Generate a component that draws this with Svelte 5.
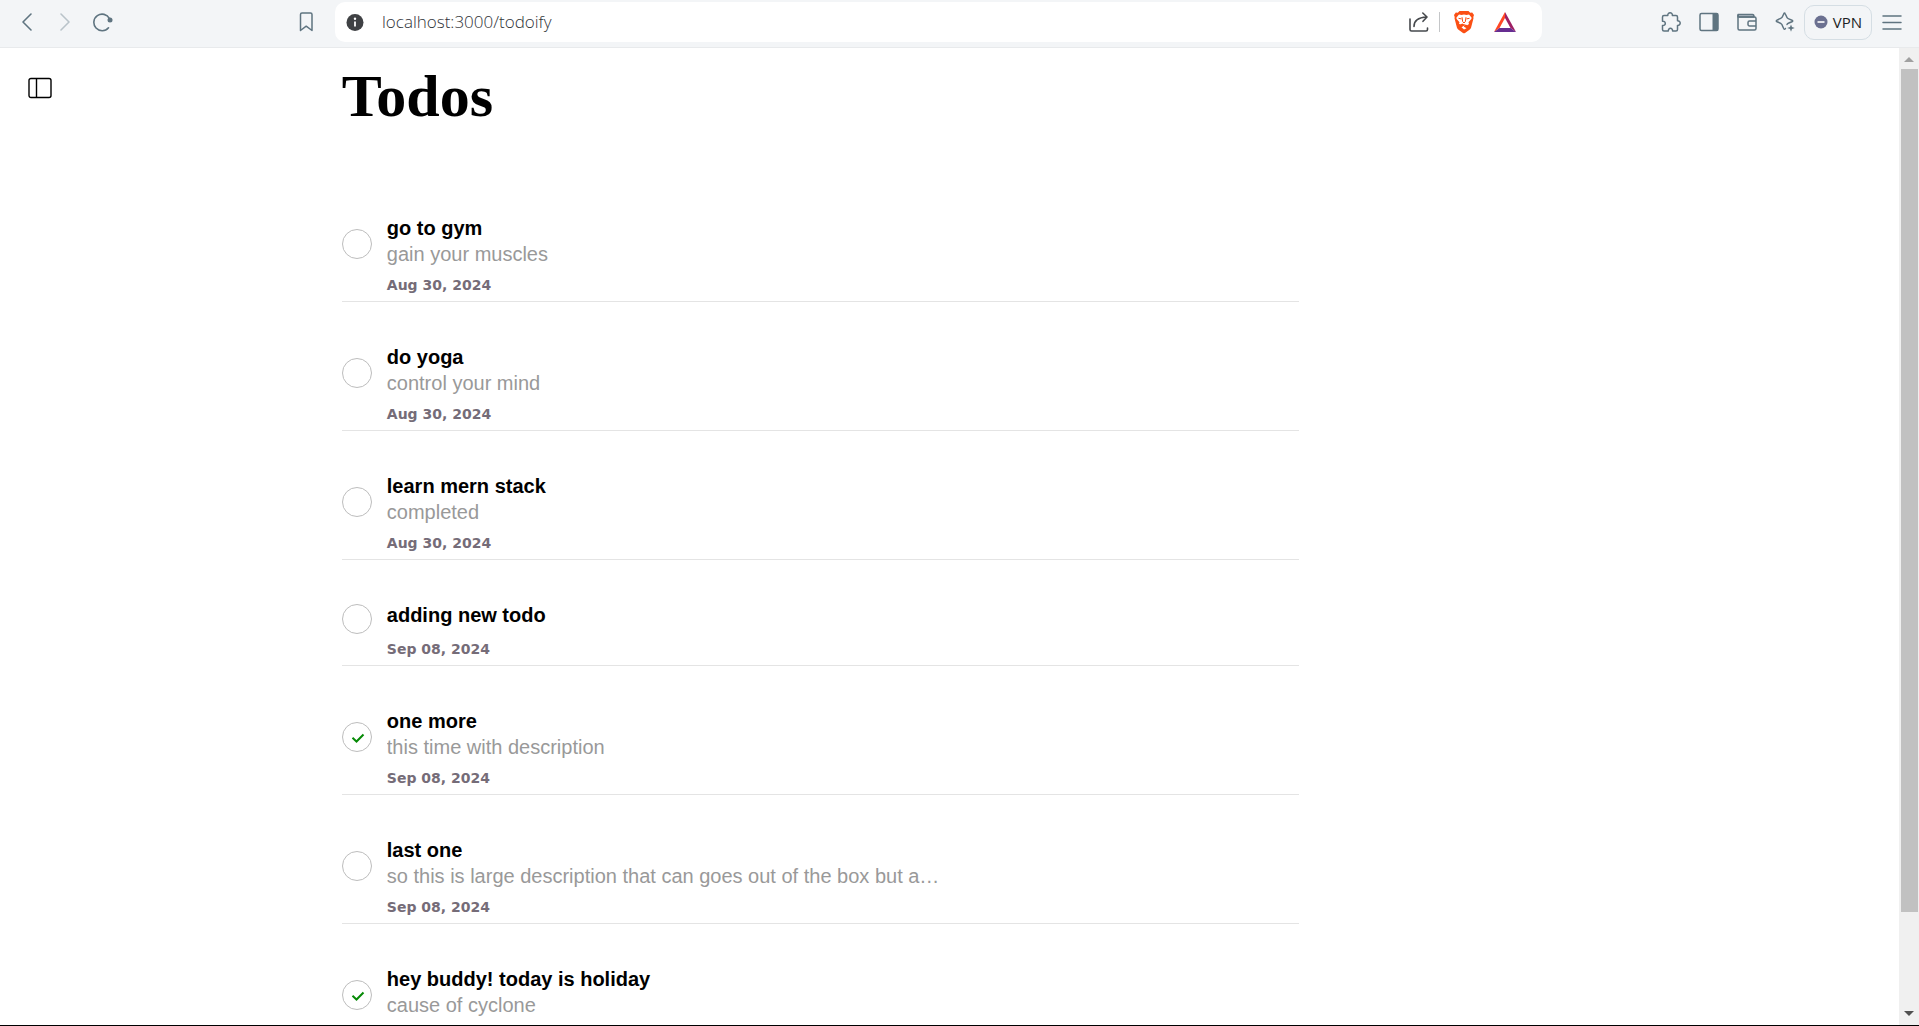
<script>
  let todos = $state([
    { title: 'go to gym', note: 'gain your muscles', date: 'Aug 30, 2024', done: false },
    { title: 'do yoga', note: 'control your mind', date: 'Aug 30, 2024', done: false },
    { title: 'learn mern stack', note: 'completed', date: 'Aug 30, 2024', done: false },
    { title: 'adding new todo', note: '', date: 'Sep 08, 2024', done: false },
    { title: 'one more', note: 'this time with description', date: 'Sep 08, 2024', done: true },
    { title: 'last one', note: 'so this is large description that can goes out of the box but a…', date: 'Sep 08, 2024', done: false },
    { title: 'hey buddy! today is holiday', note: 'cause of cyclone', date: 'Sep 08, 2024', done: true }
  ]);
  let url = $state('localhost:3000/todoify');
</script>

<div class="window">
  <header class="toolbar">
    <nav class="left" aria-label="Navigation">
      <button class="icon" aria-label="Back">
        <svg width="20" height="20" viewBox="0 0 20 20" fill="none" stroke="#5f7480" stroke-width="1.6" stroke-linecap="round" stroke-linejoin="round"><path d="M14 2 6 10l8 8" /></svg>
      </button>
      <button class="icon" aria-label="Forward">
        <svg width="20" height="20" viewBox="0 0 20 20" fill="none" stroke="#b9c3c9" stroke-width="1.6" stroke-linecap="round" stroke-linejoin="round"><path d="m6 2 8 8-8 8" /></svg>
      </button>
      <button class="icon" aria-label="Reload">
        <svg width="20" height="20" viewBox="0 0 20 20" fill="none" stroke="#5f7480" stroke-width="1.6" stroke-linecap="round"><path d="M15.500 15.800A8.300 8.300 0 1 1 16.500 6.600" /><circle cx="17" cy="8" r="2.500" fill="#5f7480" stroke="none" /></svg>
      </button>
      <button class="icon bookmark" aria-label="Bookmark">
        <svg width="20" height="20" viewBox="0 0 20 20" fill="none" stroke="#5f7480" stroke-width="1.5" stroke-linejoin="round"><path d="M6 1h8.500a1.500 1.500 0 0 1 1.500 1.500V18.500L10.200 14.200 4.500 18.500V2.500A1.500 1.500 0 0 1 6 1Z" /></svg>
      </button>
    </nav>

    <div class="address">
      <button class="icon" aria-label="Site information">
        <svg width="20" height="20" viewBox="0 0 20 20"><circle cx="10" cy="10.500" r="8.500" fill="#3f4144" /><circle cx="10" cy="6.800" r="1.200" fill="#fff" /><path d="M10 9.500v5" stroke="#fff" stroke-width="1.800" /></svg>
      </button>
      <input type="text" aria-label="Address" bind:value={url} />
      <button class="icon" aria-label="Share">
        <svg width="20" height="20" viewBox="0 0 20 20" fill="none" stroke="#46494d" stroke-width="1.600" stroke-linecap="round" stroke-linejoin="round"><path d="M1 7v10.500a1.500 1.500 0 0 0 1.500 1.500H17a1.500 1.500 0 0 0 1.500-1.500V16" /><path d="M5 14.500c0-5.500 3.500-9 12.500-9.500M13.800 1 18 5l-4 4.300" /></svg>
      </button>
      <span class="divider"></span>
      <button class="icon" aria-label="Brave Shields">
        <svg width="20" height="24" viewBox="0 0 20 24">
          <path d="M5.500 1h9l1.700 1.700 2-.2L20 5l-.7 2 .2 1.300-2.400 9.100q-.4 1.400-1.600 2.300L11 23q-1 .7-2 0l-4.500-3.300q-1.200-.9-1.600-2.300L.5 8.300.7 7 0 5l1.800-2.500 2 .2Z" fill="#fb4f14" />
          <path d="M5 4.500 7.500 5 10 4.500l2.500.5 2.500-.5L17.500 7.500q.3 1-.4 1.800l-2.600 3 .5 1.800-1.800 1.200-1.600-.7-1.600 1.200v1l2.500 1.500L10 19.500l-2.500-2.200L10 15.800v-1l-1.600-1.200-1.600.7L5 14.100l.5-1.800-2.600-3q-.7-.8-.4-1.800Z" fill="#fff" />
          <path d="m4.500 8.300 3 .6M15.500 8.300l-3 .6M8 7.200l.7 4.500L10 13l1.300-1.300.7-4.500M7.500 16.200 10 14.500l2.500 1.700" fill="none" stroke="#fb4f14" stroke-width="1" />
        </svg>
      </button>
      <button class="icon bat" aria-label="Brave Rewards">
        <svg width="22" height="20" viewBox="0 0 22 20">
          <path d="M11 0v6L5.500 16 0 20Z" fill="#ff4724" />
          <path d="M11 0v6l5.500 10 5.500 4Z" fill="#9e1f63" />
          <path d="m0 20 5.500-4h11l5.500 4Z" fill="#662d91" />
        </svg>
      </button>
    </div>

    <div class="right">
      <button class="icon" aria-label="Extensions">
        <svg width="20" height="20" viewBox="0 0 20 20" fill="none" stroke="#5f7480" stroke-width="1.500" stroke-linejoin="round"><path d="M3 3.500H6.800c-.4-3.600 5-3.600 4.600 0H15a1.500 1.500 0 0 1 1.500 1.500v3.800c3.600-.2 3.600 4.800 0 4.600V17.500a1.500 1.500 0 0 1-1.500 1.500h-3.400c.2-3.600-4.500-3.600-4.300 0H3A1.500 1.500 0 0 1 1.500 17.500v-3.900c3.700.3 3.700-4.700 0-4.400V5A1.500 1.500 0 0 1 3 3.500Z" /></svg>
      </button>
      <button class="icon" aria-label="Side panel">
        <svg width="20" height="20" viewBox="0 0 20 20"><rect x="1" y="1.500" width="18" height="17" rx="1.500" fill="none" stroke="#5f7480" stroke-width="1.500" /><path d="M13.500 1.500H19v17h-5.500Z" fill="#5f7480" /></svg>
      </button>
      <button class="icon" aria-label="Wallet">
        <svg width="20" height="20" viewBox="0 0 20 20" fill="none" stroke="#5f7480" stroke-width="1.500" stroke-linejoin="round"><path d="M1 2.500h14.500q1.500 0 1.500 2.500H1Z" fill="#b6bfca" /><path d="M1 3v13.500A1.500 1.500 0 0 0 2.500 18h15a1.500 1.500 0 0 0 1.500-1.500v-10A1.500 1.500 0 0 0 17.500 5H2" /><path d="M19 9h-6.500a1.500 1.500 0 0 0-1.500 1.500v2a1.500 1.500 0 0 0 1.500 1.500H19" /></svg>
      </button>
      <button class="icon" aria-label="Leo AI">
        <svg width="20" height="20" viewBox="0 0 20 20" fill="none" stroke="#5f7480" stroke-width="1.500" stroke-linejoin="round" stroke-linecap="round"><path d="M12 12.500q.6-1.200 5-2.700 1.500-.8 0-1.600-4.500-1.500-5-2.700T10.300 2q-.8-1.800-1.600 0-1.300 3-1.800 3.500T2 8.200q-1.500.8 0 1.600 4.300 1.400 4.900 2.700t1.800 4q.8 1.600 1.700 0" /><path d="m16 12.500 1 2.600 2.800.9-2.800 1-1 2.700-1-2.700-2.800-1 2.800-.9Z" fill="#5f7480" stroke="none" /></svg>
      </button>
      <button class="vpn">
        <svg width="14" height="14" viewBox="0 0 14 14"><circle cx="7" cy="7" r="6.500" fill="#6b7090" /><path d="M3.500 7h7" stroke="#fff" stroke-width="1.600" /></svg>
        VPN
      </button>
      <button class="icon menu" aria-label="Menu">
        <svg width="20" height="20" viewBox="0 0 20 20" stroke="#5f7480" stroke-width="1.500" stroke-linecap="round"><path d="M1 4h18M1 10.500h18M1 17h18" /></svg>
      </button>
    </div>
  </header>

  <div class="viewport">
    <div class="page">
      <aside>
        <button class="icon" aria-label="Open sidebar">
          <svg width="24" height="22" viewBox="0 0 24 22" fill="none" stroke="#000" stroke-width="1.400"><rect x="1" y="1.500" width="22" height="19" rx="2" /><path d="M8.500 1.500v19" /></svg>
        </button>
      </aside>
      <main>
        <h1>Todos</h1>
        <ul>
          {#each todos as todo}
            <li>
              <label class="item">
                <span class="check">
                  <input type="checkbox" bind:checked={todo.done} />
                  {#if todo.done}
                    <svg width="30" height="30" viewBox="0 0 30 30" fill="none" stroke="#068a06" stroke-width="2"><path d="m10.500 15.800 4 3.700 7-7" /></svg>
                  {/if}
                </span>
                <span class="text">
                  <span class="title">{todo.title}</span>
                  {#if todo.note}<span class="note">{todo.note}</span>{/if}
                </span>
              </label>
              <time>{todo.date}</time>
            </li>
          {/each}
        </ul>
      </main>
    </div>
    <div class="scrollbar" aria-hidden="true">
      <svg width="10" height="5" viewBox="0 0 10 5"><path d="M0 5 5 0l5 5Z" fill="#a0a0a0" /></svg>
      <div class="track"><div class="thumb"></div></div>
      <svg width="10" height="5" viewBox="0 0 10 5"><path d="m0 0 5 5 5-5Z" fill="#505050" /></svg>
    </div>
  </div>
</div>

<style>
  :global(body) {
    margin: 0;
    overflow: hidden;
  }
  .window {
    display: flex;
    flex-direction: column;
    height: 100vh;
    box-sizing: border-box;
    border-bottom: 1px solid #000;
    background: #fff;
    font-family: 'Liberation Sans', Arial, sans-serif;
  }
  button {
    padding: 0;
    border: 0;
    background: none;
    cursor: pointer;
  }
  .icon {
    display: flex;
    flex: none;
  }
  .toolbar {
    display: flex;
    flex: none;
    height: 47px;
    background: #f3f5f7;
    border-bottom: 1px solid #e8eaec;
  }
  .left {
    display: flex;
    align-items: center;
    gap: 18px;
    width: 335px;
    box-sizing: border-box;
    padding: 0 19px 3px 17px;
  }
  .bookmark {
    margin-left: auto;
  }
  .address {
    display: flex;
    flex: 1;
    align-items: center;
    min-width: 0;
    height: 40px;
    margin-top: 2px;
    padding: 0 26px 0 10px;
    box-sizing: border-box;
    border-radius: 10px;
    background: #fff;
  }
  .address input {
    flex: 1;
    min-width: 0;
    margin: 0 0 0 17px;
    padding: 0;
    border: 0;
    outline: 0;
    background: none;
    color: #303338;
    font: 300 17px/24px 'Open Sans', 'Noto Sans', sans-serif;
  }
  .divider {
    width: 1px;
    height: 20px;
    margin: 0 14px 0 10px;
    background: #c4c6c8;
  }
  .bat {
    margin-left: 20px;
  }
  .right {
    display: flex;
    align-items: center;
    justify-content: flex-end;
    gap: 18px;
    width: 377px;
    box-sizing: border-box;
    padding: 0 17px 3px 0;
  }
  .vpn {
    display: flex;
    align-items: center;
    justify-content: center;
    gap: 5px;
    width: 68px;
    height: 35px;
    margin: 0 -8px 0 -9px;
    border: 1px solid #d5dee4;
    border-radius: 10px;
    color: #1d1f25;
    font: 15px/20px 'Open Sans', 'Noto Sans', sans-serif;
  }
  .viewport {
    display: flex;
    flex: 1;
    min-height: 0;
  }
  .page {
    display: flex;
    flex: 1;
    min-width: 0;
    overflow-y: auto;
    scrollbar-width: none;
  }
  aside {
    flex: none;
    width: 18%;
    box-sizing: border-box;
    padding: 29px 28px;
  }
  main {
    width: 50.4%;
    padding-top: 13px;
  }
  h1 {
    margin: 0;
    font: bold 60px/70px 'Liberation Serif', 'Times New Roman', serif;
    color: #000;
  }
  ul {
    margin: 86px 0 0;
    padding: 0;
    list-style: none;
  }
  li {
    margin-bottom: 44px;
    padding-bottom: 7px;
    border-bottom: 1px solid #e4e4e4;
  }
  .item {
    display: flex;
    align-items: center;
    gap: 15px;
  }
  .check {
    display: grid;
    flex: none;
  }
  .check > :global(*) {
    grid-area: 1 / 1;
  }
  .check input {
    appearance: none;
    width: 30px;
    height: 30px;
    margin: 0;
    border: 1px solid #bdbdbd;
    border-radius: 50%;
  }
  .check svg {
    pointer-events: none;
  }
  .text {
    display: flex;
    flex-direction: column;
    min-width: 0;
    padding-bottom: 4px;
    font-size: 20px;
    line-height: 23px;
  }
  .title {
    margin-bottom: 3px;
    font-weight: bold;
    color: #000;
  }
  .note {
    overflow: hidden;
    color: #999;
    text-overflow: ellipsis;
    white-space: nowrap;
  }
  time {
    display: block;
    margin: 7px 0 0 45px;
    color: #756c78;
    font: bold 14px/17px 'DejaVu Sans', Verdana, sans-serif;
  }
  .scrollbar {
    display: flex;
    flex: none;
    flex-direction: column;
    align-items: center;
    width: 20px;
    box-sizing: border-box;
    padding: 9px 0;
    background: #f0f0f0;
  }
  .track {
    flex: 1;
    width: 17px;
    margin: 7px 0;
  }
  .thumb {
    height: 90.2%;
    background: #c1c1c1;
  }
</style>
